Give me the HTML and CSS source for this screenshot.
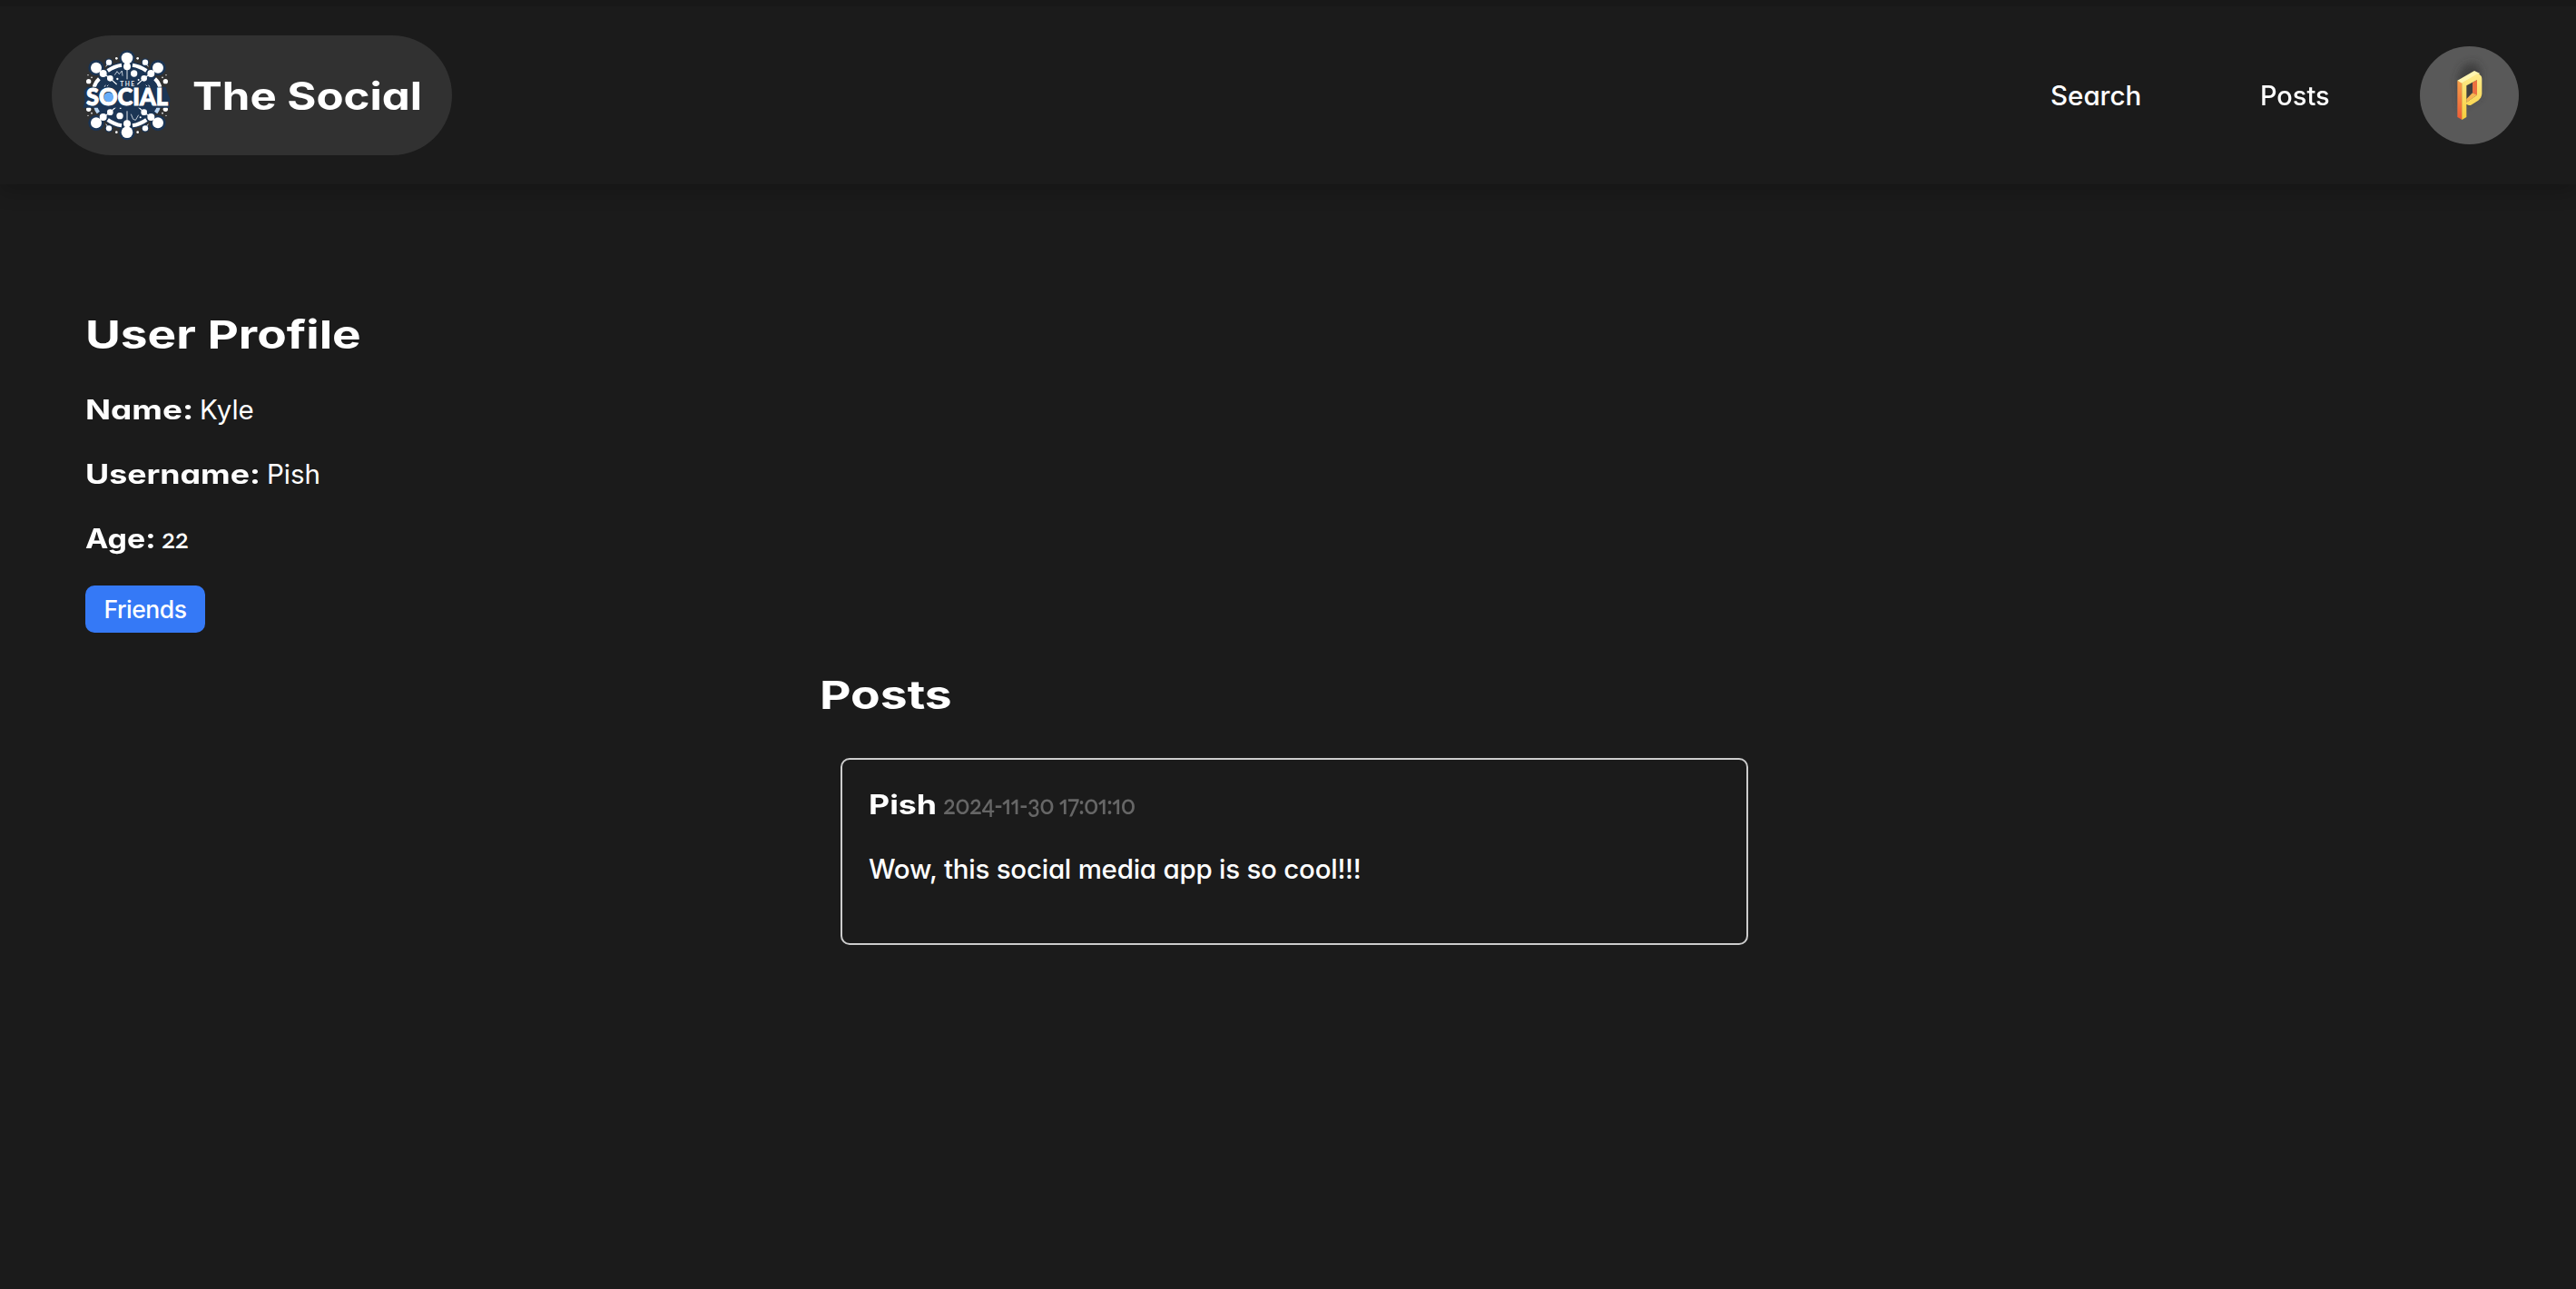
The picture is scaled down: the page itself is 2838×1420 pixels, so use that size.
FILE: index.html
```
<!DOCTYPE html>
<html lang="en">
<head>
<meta charset="utf-8">
<title>The Social</title>
<link rel="stylesheet" href="styles.css">
</head>
<body>
<header class="navbar">
  <a class="brand">
    <svg class="brand-logo" viewBox="0 0 330 330" aria-hidden="true">
      <defs>
        <g id="arm">
          <path d="M168 42V112" stroke="#dfe5ec" stroke-width="3"/>
          <circle cx="168" cy="42" r="19"/>
          <circle cx="168" cy="70" r="12"/>
        </g>
        <g id="corner">
          <path d="M66 74L112 109L134 129" stroke="#eef2f6" stroke-width="3.5"/>
          <circle cx="66" cy="74" r="18"/>
          <circle cx="89" cy="93" r="12"/>
          <circle cx="112" cy="109" r="10"/>
          <path d="M108 56L98 70" stroke="#dfe5ec" stroke-width="3"/>
          <circle cx="108" cy="56" r="9.500"/>
          <circle cx="133" cy="43" r="4"/>
          <circle cx="41" cy="119" r="8"/>
          <circle cx="51" cy="106" r="2.500"/>
          <circle cx="39" cy="98" r="2"/>
          <path d="M97 131L90 143M106 131L102 135" stroke="#cfd8e3" stroke-width="3"/>
        </g>
      </defs>
      <g fill="#1b3555">
        <circle cx="168" cy="165" r="112"/>
        <circle cx="168" cy="42" r="26"/><circle cx="168" cy="287" r="26"/>
        <circle cx="66" cy="74" r="26"/><circle cx="270" cy="74" r="26"/>
        <circle cx="66" cy="256" r="26"/><circle cx="270" cy="256" r="26"/>
        <circle cx="108" cy="56" r="13"/><circle cx="228" cy="56" r="13"/>
        <circle cx="108" cy="274" r="13"/><circle cx="228" cy="274" r="13"/>
      </g>
      <g fill="none" stroke="#fff" stroke-width="12">
        <path d="M104 84Q125 69 150 65M186 65Q211 69 232 84M59 138Q63 122 76 110M277 138Q273 122 260 110M104 246Q125 261 150 265M186 265Q211 261 232 246"/>
        <path d="M64 204Q66 213 73 222M272 204Q270 213 263 222" stroke="#b9d5f2"/>
      </g>
      <g fill="#fff">
        <use href="#arm"/>
        <use href="#arm" transform="matrix(1 0 0 -1 0 329)"/>
        <use href="#corner"/>
        <use href="#corner" transform="matrix(-1 0 0 1 336 0)"/>
        <use href="#corner" transform="matrix(1 0 0 -1 0 330)"/>
        <use href="#corner" transform="matrix(-1 0 0 -1 336 330)"/>
        <circle cx="191" cy="93" r="11"/>
        <circle cx="144" cy="233" r="11"/>
        <circle cx="136" cy="111" r="3.500"/><circle cx="206" cy="114" r="3"/>
        <circle cx="146" cy="207" r="3"/><circle cx="212" cy="238" r="3"/>
      </g>
      <path d="M127 98L135 86L142 95L151 84L153 101M181 227L188 244L196 247L206 230" fill="none" stroke="#dfe5ec" stroke-width="2.500"/>
      <path d="M36 137H296L300 152L310 178L308 206H22L28 188L26 150Z" fill="#1b3555"/>
      <rect x="142" y="114" width="53" height="24" fill="#1b3555"/>
      <text class="logo-small" x="145" y="134" textLength="47">THE</text>
      <text class="logo-word" x="33" y="199" textLength="270" lengthAdjust="spacingAndGlyphs">SOCIAL</text>
      <circle cx="107" cy="171" r="16" fill="#68adf8"/>
    </svg>
    <span class="brand-name">The Social</span>
  </a>
  <nav class="links">
    <a class="link link-search">Search</a>
    <a class="link link-posts">Posts</a>
    <a class="avatar">
      <svg viewBox="48 33 327 324" aria-label="Profile">
        <defs>
          <linearGradient id="side" x2="0" y2="1"><stop stop-color="#f6a04a"/><stop offset="1" stop-color="#ee5c36"/></linearGradient>
          <linearGradient id="front" x2="0" y2="1"><stop stop-color="#ffec8c"/><stop offset="1" stop-color="#f7cd3b"/></linearGradient>
          <filter id="soft" x="-60%" y="-60%" width="220%" height="220%"><feGaussianBlur stdDeviation="13"/></filter>
        </defs>
        <path d="M172 140L190 98L228 85L250 110L245 200L180 235Z" fill="#2d2d2d" opacity=".6" filter="url(#soft)"/>
        <path d="M172 146L188 153V276L172 267Z" fill="url(#side)"/>
        <path d="M172 146L228 114L247 123L187 155Z" fill="#fff6b0"/>
        <path d="M222 152L237 144V196L222 187Z" fill="#ec7040"/>
        <path d="M202 207L222 187L237 194L202 218Z" fill="#f8b552"/>
        <path fill-rule="evenodd" d="M187 154L238 124Q253 127 253 141V190Q252 204 241 212L217 227Q210 230 202 224V267L187 276ZM202 163V218L237 194V144Z" fill="url(#front)"/>
      </svg>
    </a>
  </nav>
</header>
<main>
  <section class="profile">
    <h1 class="heading"><span class="wide heading-user">User Profile</span></h1>
    <p class="row"><strong class="wide label-name">Name:</strong><span class="value">Kyle</span></p>
    <p class="row"><strong class="wide label-username">Username:</strong><span class="value">Pish</span></p>
    <p class="row"><strong class="wide label-age">Age:</strong><span class="digits">22</span></p>
    <button class="friends">Friends</button>
  </section>
  <section class="posts">
    <h1 class="heading"><span class="wide heading-posts">Posts</span></h1>
    <article class="post">
      <p class="row"><strong class="wide author">Pish</strong><time class="digits date">2024-11-30 17:01:10</time></p>
      <p class="row"><span class="message">Wow, this social media app is so cool!!!</span></p>
    </article>
  </section>
</main>
</body>
</html>
```
FILE: styles.css
```
* { box-sizing: border-box; margin: 0; padding: 0; }

body {
  min-height: 1420px;
  background: #1b1b1b;
  color: #fff;
  font-family: Inter, "Liberation Sans", sans-serif;
  font-size: 29.5px;
  font-feature-settings: "cv11";
}

.navbar {
  display: flex;
  justify-content: space-between;
  align-items: center;
  height: 203px;
  padding: 0 63px 0 57px;
  border-top: 7px solid #181818;
  box-shadow: 0 8px 20px rgba(0, 0, 0, .2);
}

.brand {
  display: flex;
  align-items: center;
  width: 441px;
  height: 132px;
  padding-left: 27px;
  border-radius: 66px;
  background: #313131;
}

.brand-logo { width: 110px; height: 110px; }
.logo-small { font: 700 20px Lato, sans-serif; fill: #e8edf3; }
.logo-word { font: 900 77px Lato, sans-serif; fill: #fff; stroke: #fff; stroke-width: 3px; }

.brand-name {
  margin-left: 18px;
  font-size: 42px;
  font-weight: 700;
  white-space: nowrap;
  transform: scaleX(1.17);
  transform-origin: left;
}

.links { display: flex; align-items: center; }
.link { font-weight: 500; }
.link-search { width: 231px; }
.link-posts { width: 176px; transform: scaleX(.98); transform-origin: left; }

.avatar {
  width: 109px;
  height: 108px;
  border-radius: 50%;
  background: #595959;
}
.avatar svg { display: block; width: 109px; height: 108px; }

.wide {
  display: inline-block;
  flex: none;
  font-weight: 700;
  white-space: nowrap;
  transform-origin: left;
}

.profile { padding: 135px 94px 0; }
.heading { height: 60px; font-size: 43px; line-height: 60px; }
.heading-user { transform: scaleX(1.235); }
.heading-posts { transform: scaleX(1.24); }
.profile .heading { margin-bottom: 18px; }

.row { display: flex; align-items: baseline; height: 71px; line-height: 71px; }
.label-name { width: 126px; transform: scaleX(1.25); }
.label-username { width: 200px; transform: scaleX(1.212); }
.label-age { width: 84px; transform: scaleX(1.15); }

.digits {
  font-family: Lato, sans-serif;
  font-size: 28px;
  font-weight: 600;
  font-feature-settings: "onum", "pnum";
  letter-spacing: -.5px;
}

.friends {
  display: block;
  width: 132px;
  height: 52px;
  margin-top: 16px;
  border: 0;
  border-radius: 10px;
  background: #3579f6;
  color: #fff;
  font-family: inherit;
  font-size: 26.500px;
  font-weight: 500;
  font-feature-settings: inherit;
  letter-spacing: -.5px;
}

.posts { width: 1032px; margin: 38px auto 0; }
.post {
  width: 1000px;
  height: 206px;
  margin: 40px 0 0 23px;
  padding: 14px 29px;
  border: 2px solid #ccc;
  border-radius: 10px;
}
.author { width: 82px; transform: scaleX(1.21); }
.date {
  color: #666;
  white-space: nowrap;
  letter-spacing: -.7px;
  transform: scaleX(.92);
  transform-origin: left;
}
.message { font-weight: 500; white-space: nowrap; letter-spacing: -.25px; }
```
